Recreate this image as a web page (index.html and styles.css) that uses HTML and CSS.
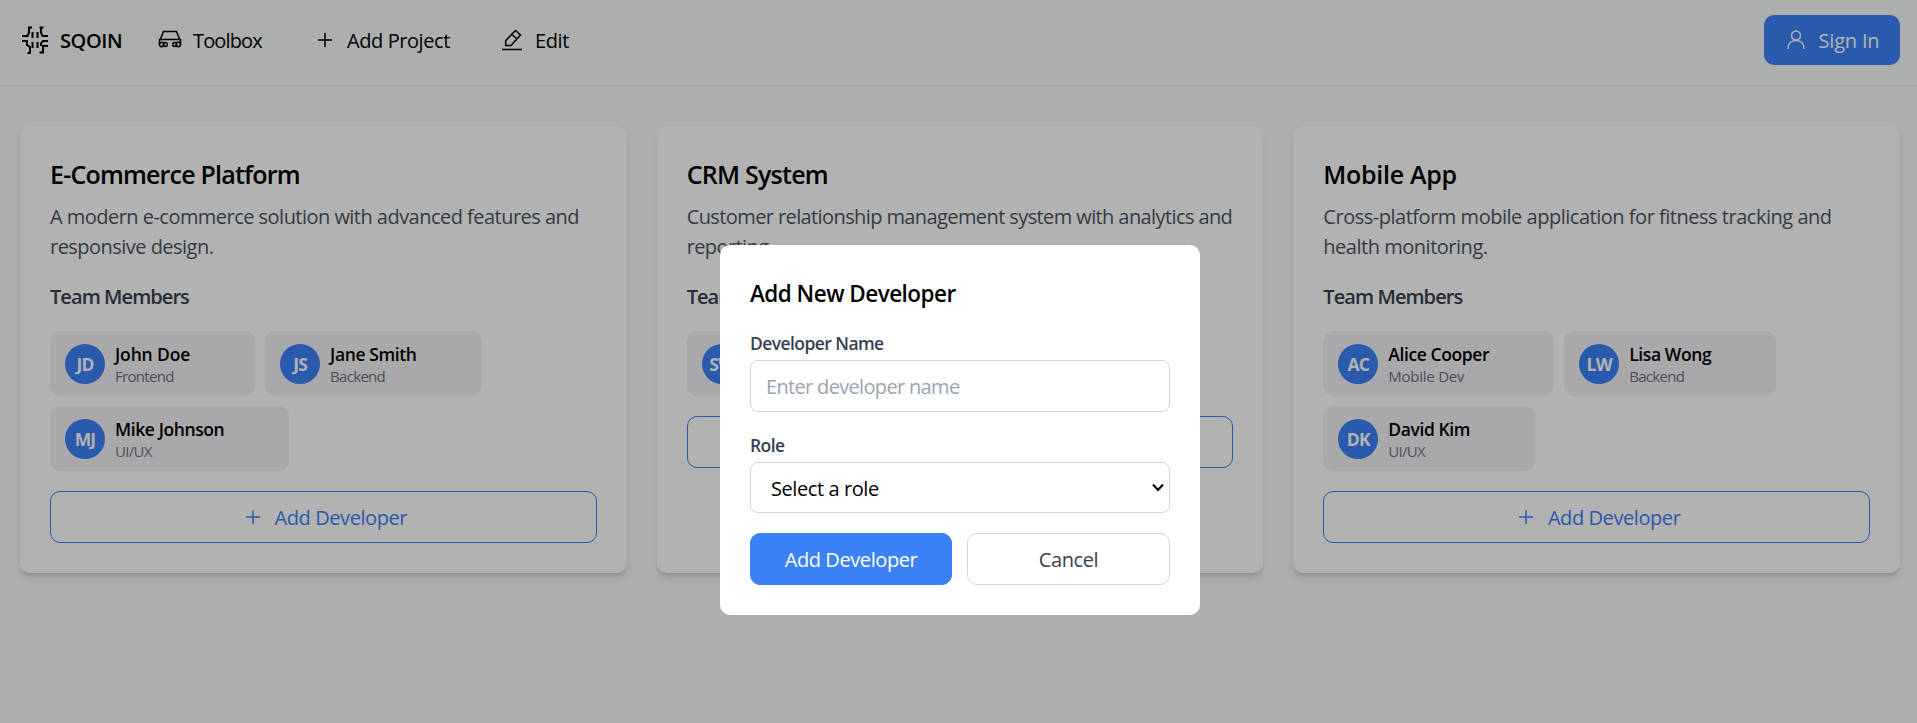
FILE: index.html
```html
<!DOCTYPE html>
<html lang="en">
<head>
<meta charset="utf-8">
<title>SQOIN</title>
<link rel="stylesheet" href="styles.css">
</head>
<body>
<div class="page">
  <header class="header">
    <nav class="nav">
      <a class="brand"><svg class="brand-icon" viewBox="0 0 28 28"><path d="M11 1.500H8v5L6.500 10H1M1 15h5v4l3 2v6H6.500M18.500 1.500h4M20 1.500v5l1.500 3.500H27M27 15h-5l-2 2.500V20M27 20h-5v6.500h-3.500M11.500 6v6M16.500 6v6M11.500 16v6M16.500 16v6"/></svg><span class="brand-name">SQOIN</span></a>
      <a class="nav-item toolbox"><svg class="icon car" viewBox="0 0 24 19"><path d="M2.500 9 5.500 1.500h13l3 7.500M1 9.500h22M1.500 9v6M22.500 9v6"/><circle cx="3.700" cy="14.500" r="2.200"/><circle cx="7.300" cy="14.500" r="2"/><circle cx="16.700" cy="14.500" r="2"/><circle cx="20.300" cy="14.500" r="2.200"/></svg><span class="nav-tight">Toolbox</span></a>
      <a class="nav-item add-project"><svg class="icon plus" viewBox="0 0 16 16"><path d="M8 1v14M1 8h14"/></svg><span>Add Project</span></a>
      <a class="nav-item edit"><svg class="icon pencil" viewBox="0 0 20 22"><path d="M0 20.500h20M3.700 16.500v-5L13.500 1.500 18.500 6l-9.500 10.500zM10 5.500l5 4.500"/></svg><span>Edit</span></a>
    </nav>
    <button class="sign-in"><svg class="icon user" viewBox="0 0 18 20"><circle cx="9" cy="5.500" r="4.500"/><path d="M1 19c0-5 3-8.500 8-8.500s8 3.500 8 8.500"/></svg><span>Sign In</span></button>
  </header>
  <main class="grid">
    <section class="card shop">
      <h2 class="card-title">E-Commerce Platform</h2>
      <p class="card-text">A modern e-commerce solution with advanced features and responsive design.</p>
      <h3 class="team-title">Team Members</h3>
      <div class="team">
        <div class="member"><span class="avatar">JD</span><div><div class="name name-wide">John Doe</div><div class="role">Frontend</div></div></div>
        <div class="member"><span class="avatar">JS</span><div><div class="name">Jane Smith</div><div class="role">Backend</div></div></div>
        <div class="member"><span class="avatar">MJ</span><div><div class="name">Mike Johnson</div><div class="role">UI/UX</div></div></div>
      </div>
      <button class="add-dev"><svg class="icon plus" viewBox="0 0 16 16"><path d="M8 1v14M1 8h14"/></svg><span>Add Developer</span></button>
    </section>
    <section class="card crm">
      <h2 class="card-title">CRM System</h2>
      <p class="card-text">Customer relationship management system with analytics and reporting.</p>
      <h3 class="team-title">Team Members</h3>
      <div class="team">
        <div class="member"><span class="avatar">SW</span><div><div class="name">Sarah Wilson</div><div class="role">Full Stack</div></div></div>
      </div>
      <button class="add-dev"><svg class="icon plus" viewBox="0 0 16 16"><path d="M8 1v14M1 8h14"/></svg><span>Add Developer</span></button>
    </section>
    <section class="card mobile">
      <h2 class="card-title">Mobile App</h2>
      <p class="card-text">Cross-platform mobile application for fitness tracking and health monitoring.</p>
      <h3 class="team-title">Team Members</h3>
      <div class="team">
        <div class="member"><span class="avatar">AC</span><div><div class="name">Alice Cooper</div><div class="role role-wide">Mobile Dev</div></div></div>
        <div class="member"><span class="avatar">LW</span><div><div class="name">Lisa Wong</div><div class="role">Backend</div></div></div>
        <div class="member"><span class="avatar">DK</span><div><div class="name">David Kim</div><div class="role">UI/UX</div></div></div>
      </div>
      <button class="add-dev"><svg class="icon plus" viewBox="0 0 16 16"><path d="M8 1v14M1 8h14"/></svg><span>Add Developer</span></button>
    </section>
  </main>
</div>
<div class="overlay">
  <form class="modal">
    <h2 class="modal-title">Add New Developer</h2>
    <label class="label">Developer Name</label>
    <input class="input" placeholder="Enter developer name">
    <label class="label">Role</label>
    <div class="select"><span>Select a role</span><svg class="chevron" viewBox="0 0 12 9"><path d="M1 1.500 6 7l5-5.500"/></svg></div>
    <div class="actions"><button type="button" class="btn primary">Add Developer</button><button type="button" class="btn">Cancel</button></div>
  </form>
</div>
</body>
</html>
```
FILE: styles.css
```css
* { box-sizing: border-box; margin: 0; }
html { overflow: hidden; height: 100%; }
body { overflow: hidden; height: 100%; font: 20px/30px "Open Sans", "Noto Sans", sans-serif; letter-spacing: -0.42px; color: #000; }
button, input { font: inherit; letter-spacing: inherit; color: inherit; }
svg { fill: none; stroke: currentColor; stroke-width: 1.5; flex: none; }
.page { width: 1920px; height: 100%; background: #f8fbfa; }
.header { height: 86px; border-bottom: 1px solid #e5e7eb; padding: 15px 20px 20px; display: flex; justify-content: space-between; align-items: center; }
.nav { display: flex; align-items: center; }
.nav span, .sign-in span { padding-top: 2px; }
.brand, .nav-item { display: flex; align-items: center; }
.brand-icon { width: 28px; height: 28px; margin: 0 11px 0 1px; stroke-width: 2; }
.brand { width: 138px; }
.brand-name { font-weight: 600; }
.toolbox { width: 159px; }
.nav-tight { letter-spacing: -0.85px; }
.add-project { width: 185px; }
.car { width: 24px; height: 19px; margin: 0 11px 2px 0; }
.plus { width: 16px; height: 16px; margin-right: 14px; }
.pencil { width: 20px; height: 22px; margin-right: 13px; }
.sign-in { height: 50px; width: 136px; border: 0; border-radius: 10px; background: #3b82f6; color: #fff; display: flex; align-items: center; justify-content: center; gap: 14px; padding: 0 0 0 2px; letter-spacing: -0.2px; }
.user { width: 18px; height: 20px; }
.grid { display: grid; grid-template-columns: repeat(3, 1fr); gap: 30px; padding: 40px 20px; }
.card { background: #fff; border-radius: 10px; padding: 31px 30px 30px; height: 447px; box-shadow: 0 5px 7.5px -1px rgba(0,0,0,.12), 0 2.5px 5px -2px rgba(0,0,0,.12); }
.card-title { font-size: 25px; line-height: 35px; font-weight: 600; margin-bottom: 10px; letter-spacing: -0.3px; }
.shop .card-title { letter-spacing: -0.8px; }
.crm .card-title { letter-spacing: -0.75px; }
.card-text { color: #4b5563; margin: 0 -5px 20px 0; letter-spacing: -0.53px; }
.crm .card-text { letter-spacing: -0.6px; }
.mobile .card-text { letter-spacing: -0.48px; }
.team-title { font-size: 20px; line-height: 30px; font-weight: 600; color: #374151; margin-bottom: 19px; letter-spacing: -0.93px; }
.team { display: flex; flex-wrap: wrap; gap: 10px; margin-bottom: 20px; }
.member { display: flex; align-items: center; gap: 10px; height: 65px; background: #f3f3f6; border-radius: 10px; padding: 0 65px 0 15px; }
.avatar { width: 40px; height: 40px; border-radius: 50%; background: #3b82f6; color: #fff; display: flex; align-items: center; justify-content: center; font-size: 17.5px; font-weight: 700; letter-spacing: -0.8px; padding-top: 1px; }
.name { font-size: 17.5px; line-height: 25px; font-weight: 600; letter-spacing: -0.4px; padding-top: 1px; }
.name-wide { letter-spacing: -0.15px; }
.role { font-size: 15px; line-height: 20px; color: #6b7280; letter-spacing: -0.7px; margin-top: -1px; }
.role-wide { letter-spacing: -0.25px; }
.add-dev { width: 100%; height: 52px; border: 1px solid #3b82f6; border-radius: 10px; background: none; color: #3b82f6; display: flex; align-items: center; justify-content: center; padding: 0 0 0 5px; }
.add-dev span { padding-top: 2px; }
.overlay { position: fixed; top: 0; left: 0; width: 1920px; height: 100%; background: rgba(0,0,0,.3); display: flex; align-items: flex-start; justify-content: center; padding-top: 245px; }
.modal { width: 480px; height: 370px; background: #fff; border-radius: 10px; padding: 30px; }
.modal-title { font-size: 22.5px; line-height: 35px; font-weight: 600; padding-top: 1px; margin-bottom: 19px; letter-spacing: -0.53px; }
.label { display: block; font-size: 17.5px; line-height: 25px; font-weight: 600; color: #374151; padding-top: 1px; margin-bottom: 4px; letter-spacing: -0.57px; }
.input { display: block; width: 100%; height: 52px; border: 1px solid #d1d5db; border-radius: 8px; padding: 1px 15px 0; margin-bottom: 20px; letter-spacing: -0.67px; }
.input::placeholder { color: #9ca3af; }
.select { height: 51px; border: 1px solid #d1d5db; border-radius: 8px; padding: 0 5px 0 20px; display: flex; align-items: center; justify-content: space-between; margin-bottom: 20px; }
.select span { padding-top: 2px; }
.chevron { width: 12px; height: 9px; stroke-width: 2; }
.actions { display: grid; grid-template-columns: 202px 1fr; gap: 15px; }
.btn { height: 52px; border: 1px solid #d1d5db; border-radius: 10px; background: #fff; color: #374151; padding: 2px 0 0; }
.primary { background: #3b82f6; border-color: #3b82f6; color: #fff; }
```
